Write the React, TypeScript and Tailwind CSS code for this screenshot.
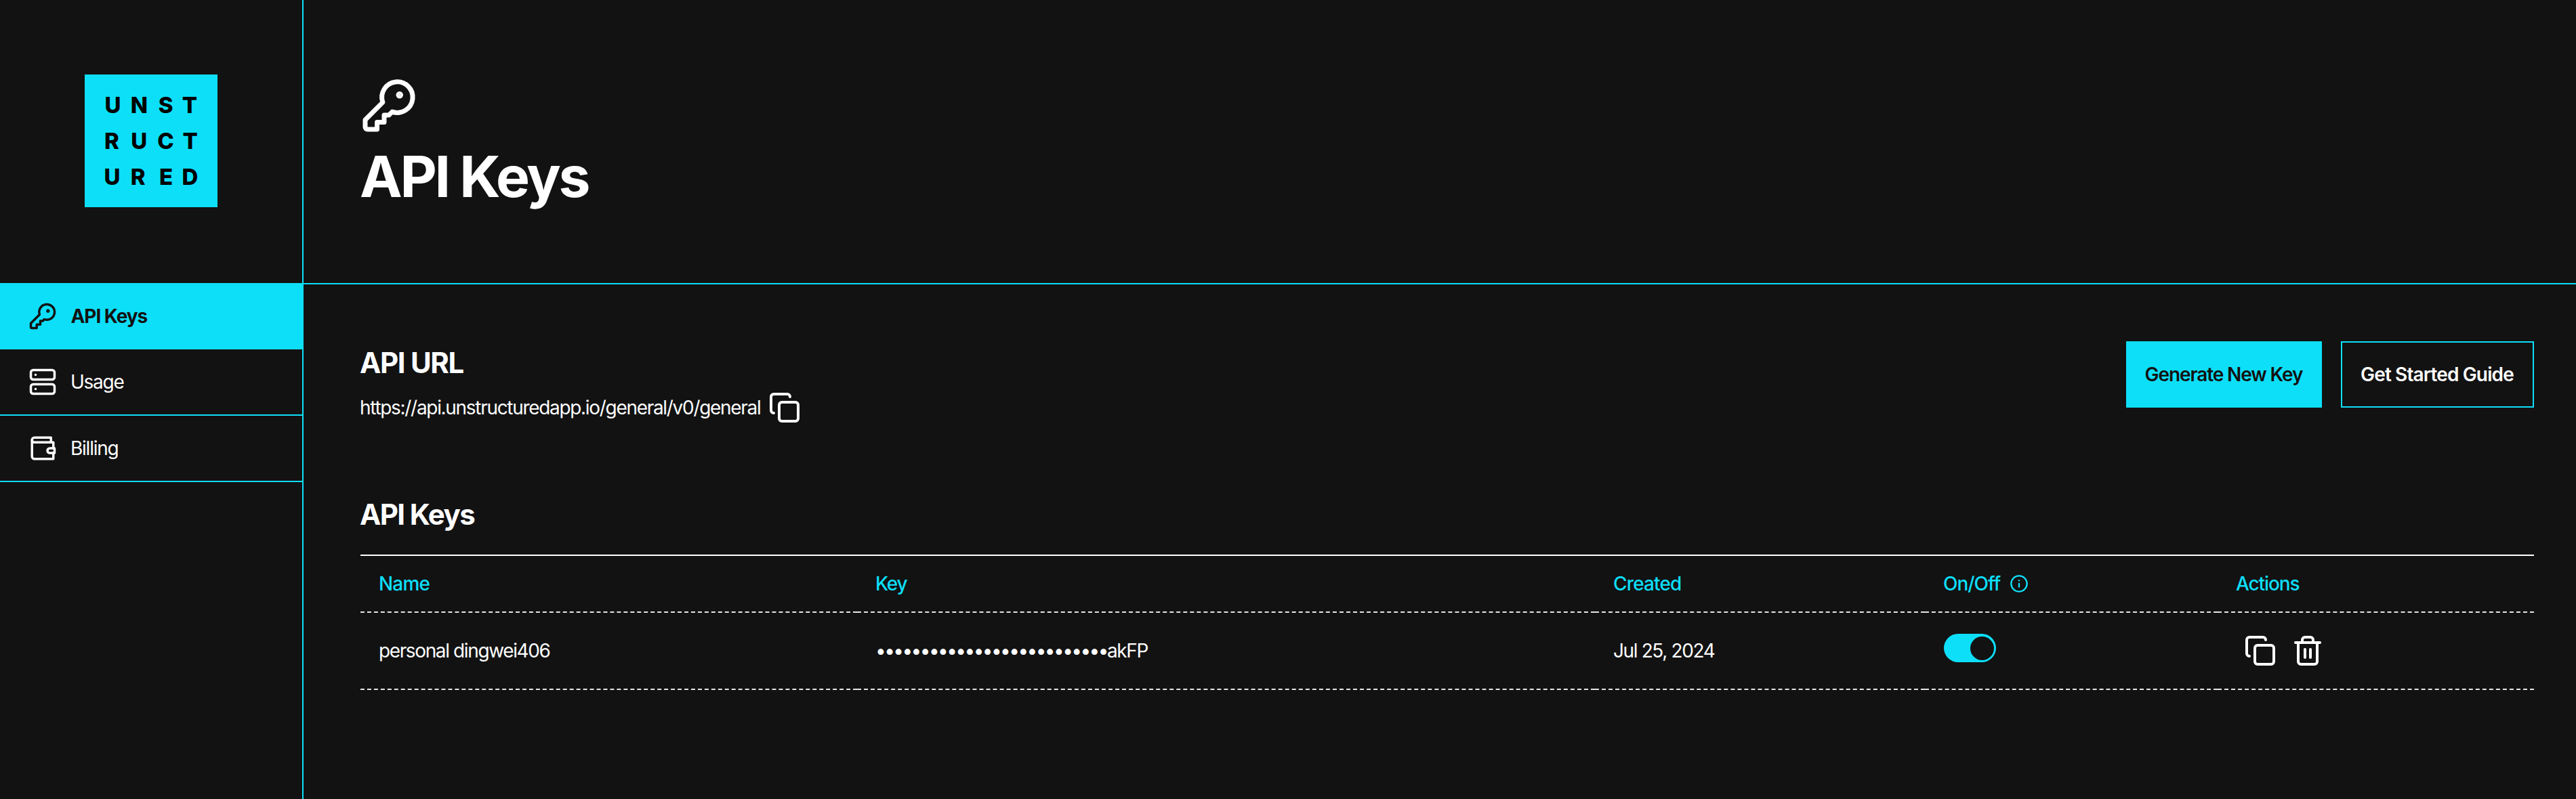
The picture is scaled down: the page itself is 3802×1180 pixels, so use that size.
import { type ReactNode } from 'react';
import { Copy, Info, Server, Trash2 } from 'lucide-react';

interface IconProps {
    className?: string;
}

function KeyIcon({ className }: IconProps) {
    return (
        <svg viewBox="0 0 24 24" fill="none" stroke="currentColor" strokeWidth={2}
             strokeLinecap="round" strokeLinejoin="round" className={className}>
            <path d="M2 18v3c0 .6.4 1 1 1h4v-3h3v-3h2l1.4-1.4a6.5 6.5 0 1 0-4-4Z" />
            <circle cx="16.5" cy="7.5" r=".5" fill="currentColor" />
        </svg>
    );
}

function WalletIcon({ className }: IconProps) {
    return (
        <svg viewBox="0 0 24 24" fill="none" stroke="currentColor" strokeWidth={2}
             strokeLinecap="round" strokeLinejoin="round" className={className}>
            <path d="M21 12V7H5a2 2 0 0 1 0-4h14v4" />
            <path d="M3 5v14a2 2 0 0 0 2 2h16v-5" />
            <path d="M18 12a2 2 0 0 0 0 4h4v-4Z" />
        </svg>
    );
}

// Each letter sits on its own grid position, hence the x lists
function Logo() {
    return (
        <svg viewBox="0 0 196 196"
             className="size-[196px] bg-[#0ddff9] font-[Inter] text-[33px] font-extrabold">
            <text y="57" x="29.5 67.7 108.8 143.8">UNST</text>
            <text y="110" x="29 68.2 107.3 144.5">RUCT</text>
            <text y="163" x="28.5 67.8 110 143.6">URED</text>
        </svg>
    );
}

interface NavItemProps {
    icon: ReactNode;
    label: string;
    active?: boolean;
}

function NavItem({ icon, label, active }: NavItemProps) {
    return (
        <a className={active
            ? '-mr-[2px] flex h-[98px] items-center gap-[20.5px] bg-[#0ddff9] pl-[42px] font-bold tracking-[-1.08px] text-[#121212]'
            : 'flex h-[98px] items-center gap-5 border-b-2 border-[#0ddff9] pl-[42px] tracking-[-1.25px]'}>
            {icon}
            <span>{label}</span>
        </a>
    );
}

const columns = 'grid grid-cols-[733px_1089px_487px_432px_467px]';
const headCell = 'flex h-[84px] items-center border-b-2 border-dashed border-[#e5e5e5] pl-[27px]';
const bodyCell = 'flex h-[114px] items-center border-b-2 border-dashed border-[#e5e5e5]';

function KeysTable() {
    return (
        <div className="mt-7 border-t-2 border-white">
            <div className={`${columns} font-medium tracking-[-0.84px] text-[#0ddff9]`}>
                <div className={headCell}>Name</div>
                <div className={`${headCell} tracking-[-1.3px]`}>Key</div>
                <div className={headCell}>Created</div>
                <div className={`${headCell} gap-[14px] tracking-[-1.04px]`}>
                    On/Off
                    <Info className="size-7" />
                </div>
                <div className={`${headCell} tracking-[-1.1px]`}>Actions</div>
            </div>
            <div className={`${columns} tracking-[-1.38px]`}>
                <div className={`${bodyCell} pl-[27px]`}>personal dingwei406</div>
                <div className={`${bodyCell} pl-[27px]`}>
                    <span className="tracking-[-2.6px]">{'•'.repeat(26)}</span>
                    <span>akFP</span>
                </div>
                <div className={`${bodyCell} pl-[27px]`}>Jul 25, 2024</div>
                <div className={`${bodyCell} pl-7`}>
                    <div className="mb-2 flex h-[42px] w-[77px] items-center justify-end rounded-full bg-[#0ddff9] pr-[3px]">
                        <div className="size-[35px] rounded-full bg-[#121212]" />
                    </div>
                </div>
                <div className={`${bodyCell} gap-[22px] pl-[39px]`}>
                    <Copy className="size-12" />
                    <Trash2 className="size-12" />
                </div>
            </div>
        </div>
    );
}

export default function App() {
    return (
        <div className="flex h-[1180px] w-[3802px] overflow-hidden bg-[#121212] font-[Inter,sans-serif] text-[28px] leading-[42px] text-white">
            <aside className="w-[448px] shrink-0 border-r-2 border-[#0ddff9]">
                <div className="flex h-[418px] items-start justify-center pt-[110px]">
                    <Logo />
                </div>
                <nav>
                    <NavItem active label="API Keys" icon={<KeyIcon className="size-[42px]" />} />
                    <NavItem label="Usage" icon={<Server className="size-[42px]" />} />
                    <NavItem label="Billing" icon={<WalletIcon className="size-[42px]" />} />
                </nav>
            </aside>

            <main className="grow">
                <header className="h-[420px] border-b-2 border-[#0ddff9] pt-[114px] pl-[84px]">
                    <KeyIcon className="size-[84px]" />
                    <h1 className="mt-5 -ml-px text-[84px] leading-[85px] font-bold tracking-[-3.33px]">
                        API Keys
                    </h1>
                </header>

                <div className="pt-[84px] pr-[62px] pl-[84px]">
                    <div className="flex items-start justify-between">
                        <div className="-ml-px">
                            <h2 className="text-[42px] leading-[63px] font-bold tracking-[-1.35px]">API URL</h2>
                            <div className="mt-[11px] flex items-center gap-3">
                                <span className="tracking-[-1.31px]">
                                    https://api.unstructuredapp.io/general/v0/general
                                </span>
                                <Copy className="size-12" />
                            </div>
                        </div>
                        <div className="flex gap-7 font-semibold">
                            <button className="h-[98px] w-[289px] bg-[#0ddff9] pr-px tracking-[-1.1px] text-[#121212]">
                                Generate New Key
                            </button>
                            <button className="h-[98px] w-[285px] border-2 border-[#0ddff9] pr-px tracking-[-0.87px]">
                                Get Started Guide
                            </button>
                        </div>
                    </div>

                    <h2 className="mt-[102px] -ml-px text-[42px] leading-[63px] font-bold tracking-[-1.61px]">
                        API Keys
                    </h2>
                    <KeysTable />
                </div>
            </main>
        </div>
    );
}
